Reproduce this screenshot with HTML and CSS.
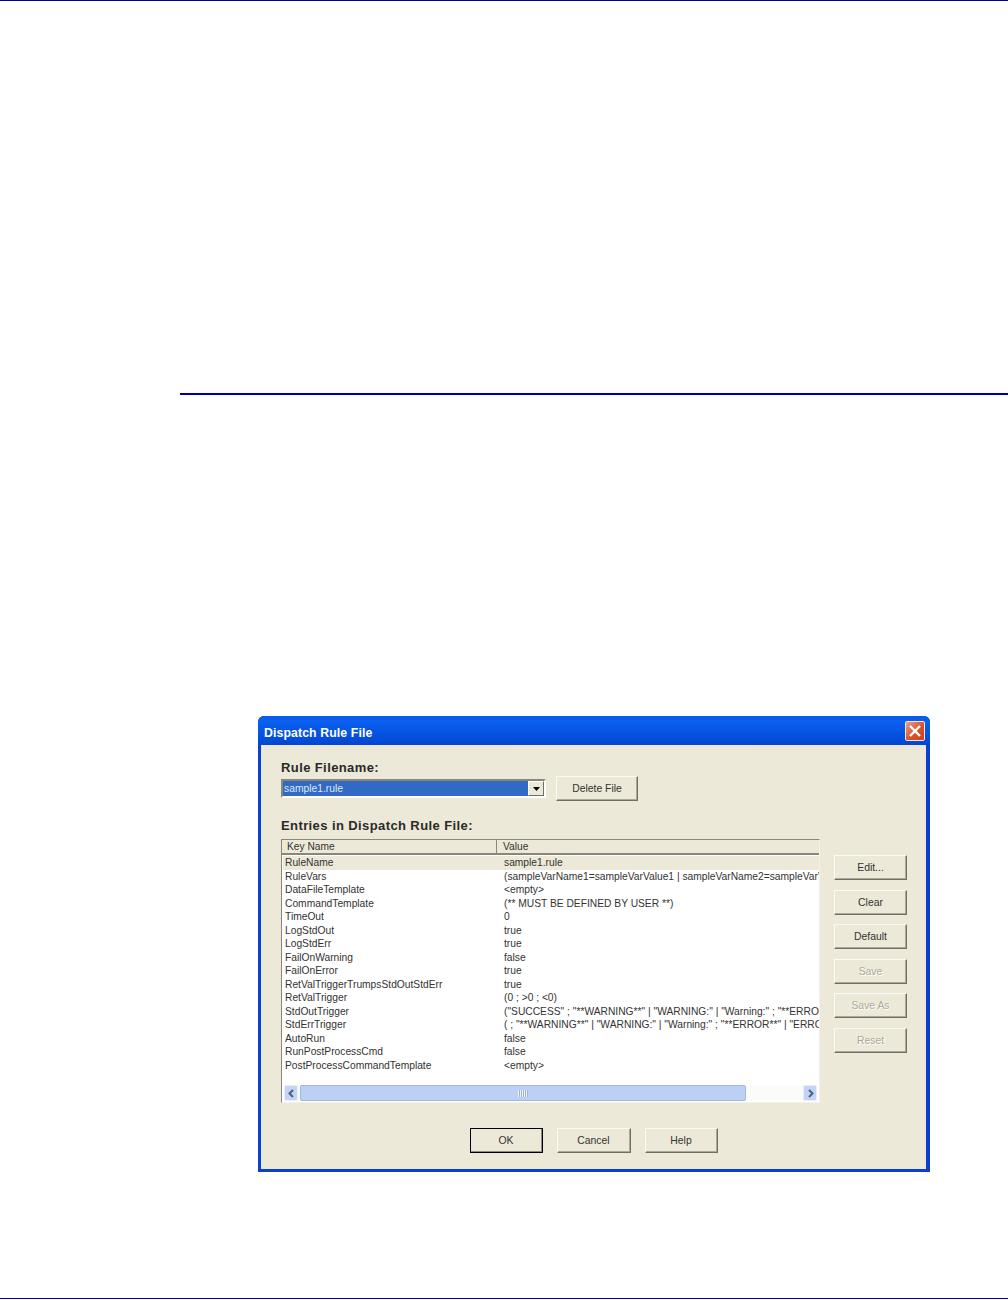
FILE: index.html
```html
<!DOCTYPE html>
<html lang="en">
<head>
<meta charset="utf-8">
<title>Dispatch Rule File</title>
<link rel="stylesheet" href="styles.css">
</head>
<body>
<div class="page">
  <div class="rule-top"></div>
  <div class="rule-mid"></div>
  <div class="dialog">
    <div class="titlebar">
      <span class="title">Dispatch Rule File</span>
      <span class="close"><svg width="20" height="20" viewBox="0 0 20 20"><path d="M5 5L15 15M15 5L5 15" stroke="#fff" stroke-width="2.4" fill="none"/></svg></span>
    </div>
    <div class="client">
      <div class="label">Rule Filename:</div>
      <div class="file-row">
        <div class="combo">
          <div class="combo-value">sample1.rule</div>
          <div class="combo-btn"><svg width="7" height="4" viewBox="0 0 7 4"><path d="M0 0H7L3.5 4Z" fill="#000"/></svg></div>
        </div>
        <button class="btn btn-delete">Delete File</button>
      </div>
      <div class="label label-entries">Entries in Dispatch Rule File:</div>
      <div class="main-row">
        <div class="list">
          <div class="list-head">
            <div class="head-key">Key Name</div>
            <div class="head-val">Value</div>
          </div>
          <div class="rows">
            <div class="row row-sel"><span>RuleName</span><span>sample1.rule</span></div>
            <div class="row"><span>RuleVars</span><span>(sampleVarName1=sampleVarValue1 | sampleVarName2=sampleVarValue2)</span></div>
            <div class="row"><span>DataFileTemplate</span><span>&lt;empty&gt;</span></div>
            <div class="row"><span>CommandTemplate</span><span>(** MUST BE DEFINED BY USER **)</span></div>
            <div class="row"><span>TimeOut</span><span>0</span></div>
            <div class="row"><span>LogStdOut</span><span>true</span></div>
            <div class="row"><span>LogStdErr</span><span>true</span></div>
            <div class="row"><span>FailOnWarning</span><span>false</span></div>
            <div class="row"><span>FailOnError</span><span>true</span></div>
            <div class="row"><span>RetValTriggerTrumpsStdOutStdErr</span><span>true</span></div>
            <div class="row"><span>RetValTrigger</span><span>(0 ; &gt;0 ; &lt;0)</span></div>
            <div class="row"><span>StdOutTrigger</span><span>("SUCCESS" ; "**WARNING**" | "WARNING:" | "Warning:" ; "**ERROR**" | "ERROR:")</span></div>
            <div class="row"><span>StdErrTrigger</span><span>( ; "**WARNING**" | "WARNING:" | "Warning:" ; "**ERROR**" | "ERROR:")</span></div>
            <div class="row"><span>AutoRun</span><span>false</span></div>
            <div class="row"><span>RunPostProcessCmd</span><span>false</span></div>
            <div class="row"><span>PostProcessCommandTemplate</span><span>&lt;empty&gt;</span></div>
          </div>
          <div class="hscroll">
            <div class="sb-btn"><svg width="9" height="9" viewBox="0 0 9 9"><path d="M6 1L2.5 4.5L6 8" stroke="#4d6185" stroke-width="2" fill="none"/></svg></div>
            <div class="sb-thumb"><span class="grip"></span></div>
            <div class="sb-track"></div>
            <div class="sb-btn"><svg width="9" height="9" viewBox="0 0 9 9"><path d="M3 1L6.5 4.5L3 8" stroke="#4d6185" stroke-width="2" fill="none"/></svg></div>
          </div>
        </div>
        <div class="side">
          <button class="btn">Edit...</button>
          <button class="btn">Clear</button>
          <button class="btn">Default</button>
          <button class="btn btn-off">Save</button>
          <button class="btn btn-off">Save As</button>
          <button class="btn btn-off">Reset</button>
        </div>
      </div>
      <div class="actions">
        <button class="btn btn-default">OK</button>
        <button class="btn btn-cancel">Cancel</button>
        <button class="btn">Help</button>
      </div>
    </div>
  </div>
  <div class="rule-bottom"></div>
</div>
</body>
</html>
```
FILE: styles.css
```css
* { box-sizing: border-box; }
html, body { margin: 0; padding: 0; background: #fff; }
.page {
  width: 1008px;
  height: 1300px;
  display: flex;
  flex-direction: column;
  font-family: "Liberation Sans", Arial, sans-serif;
  color: #222;
}
.rule-top { height: 1px; background: #0000a0; }
.rule-mid { height: 2px; background: #0000a0; margin: 392px 0 0 180px; }
.rule-bottom { height: 1px; background: #0000a0; margin-top: 126px; }

.dialog {
  width: 672px;
  height: 456px;
  margin: 321px 0 0 258px;
  background: #0a3fd0;
  border-radius: 6px 6px 0 0;
  padding: 0 4px 3px 3px;
  display: flex;
  flex-direction: column;
}
.titlebar {
  height: 29px;
  flex: none;
  margin: 0 -4px 0 -3px;
  padding: 0 5px 0 6px;
  border-radius: 6px 6px 0 0;
  background: linear-gradient(#0a5ae6 0, #0a60f0 18%, #0553e0 60%, #0346d2 100%);
  display: flex;
  align-items: center;
  justify-content: space-between;
}
.title {
  color: #fff;
  font-weight: 700;
  font-size: 12.3px;
  letter-spacing: 0.1px;
  padding-top: 4px;
}
.close {
  width: 20px;
  height: 20px;
  background: linear-gradient(135deg, #e8a28a, #d9532e 55%, #c8421e);
  border: 1px solid #f2e4dc;
  border-radius: 2px;
  display: flex;
  align-items: center;
  justify-content: center;
}
.close svg { flex: none; }

.client {
  flex: 1;
  background: #ece9d8;
  padding: 15px 19px 0 20px;
  display: flex;
  flex-direction: column;
}
.label {
  font-weight: 700;
  font-size: 13px;
  line-height: 16px;
  letter-spacing: 0.4px;
  color: #2a2a2a;
}
.label-entries { margin-top: 17px; }

.file-row {
  display: flex;
  align-items: center;
  gap: 10px;
  height: 25px;
}
.combo {
  width: 265px;
  height: 19px;
  background: #fff;
  border: 2px solid;
  border-color: #8a877a #fff #fff #8a877a;
  display: flex;
}
.combo-value {
  width: 245px;
  background: #316ac5;
  color: #dfe8f8;
  font-size: 10.3px;
  line-height: 15px;
  padding-left: 1px;
}
.combo-btn {
  flex: 1;
  background: #ece9d8;
  border: 1px solid;
  border-color: #fff #716f64 #716f64 #fff;
  display: flex;
  align-items: center;
  justify-content: center;
}

.btn {
  width: 73px;
  height: 25px;
  padding: 0;
  flex: none;
  background: #ece9d8;
  border: 1px solid;
  border-color: #fbfaf5 #716f64 #716f64 #fbfaf5;
  box-shadow: inset -1px -1px 0 #aca899;
  font-family: "Liberation Sans", Arial, sans-serif;
  font-size: 10.4px;
  color: #333;
}
.btn-delete { width: 82px; }
.btn-cancel { width: 74px; }
.btn-off {
  color: #aca899;
  text-shadow: 1px 1px 0 #fff;
}
.btn-default {
  border: 1px solid #000;
  box-shadow: inset -1px -1px 0 #8f8c7e;
}

.main-row {
  display: flex;
  gap: 14px;
  margin-top: 5px;
}
.list {
  width: 539px;
  height: 264px;
  background: #fff;
  border: 1px solid;
  border-color: #8a877a #f4f2e8 #f4f2e8 #8a877a;
  display: flex;
  flex-direction: column;
}
.list-head {
  flex: none;
  height: 15px;
  display: flex;
  background: #ece9d8;
  border-bottom: 2px solid #8a877a;
  font-size: 10.2px;
  line-height: 13px;
  color: #333;
}
.head-key {
  width: 215px;
  padding-left: 5px;
  border-right: 1px solid #8a877a;
}
.head-val { padding-left: 6px; flex: 1; }

.rows {
  flex: 1;
  min-height: 0;
  overflow: hidden;
  padding: 1px 0 0 3px;
}
.row {
  height: 13.53px;
  display: grid;
  grid-template-columns: 219px 315px;
  font-size: 10.25px;
  line-height: 13.5px;
  white-space: nowrap;
  color: #333;
}
.row span { overflow: hidden; }
.row-sel { background: #ece9d8; margin-left: -2px; padding-left: 2px; width: 536px; }

.hscroll {
  flex: none;
  height: 16px;
  margin: 0 2px 1px 2px;
  display: flex;
  gap: 2px;
  background: #fbfbf7;
}
.sb-btn {
  width: 14px;
  flex: none;
  background: #c3d4f5;
  border: 1px solid #e8eefb;
  border-radius: 2px;
  display: flex;
  align-items: center;
  justify-content: center;
}
.sb-thumb {
  width: 446px;
  flex: none;
  background: #bccff5;
  border: 1px solid #9fb6e6;
  border-radius: 2px;
  display: flex;
  align-items: center;
  justify-content: center;
}
.grip {
  width: 10px;
  height: 7px;
  background: repeating-linear-gradient(90deg, #eef3fd 0 1px, #9db2de 1px 2px);
}
.sb-track { flex: 1; }

.side {
  display: flex;
  flex-direction: column;
  gap: 9.6px;
  margin-top: 16px;
}

.actions {
  display: flex;
  justify-content: center;
  gap: 14px;
  margin-top: 25px;
  padding-right: 1px;
}
```
